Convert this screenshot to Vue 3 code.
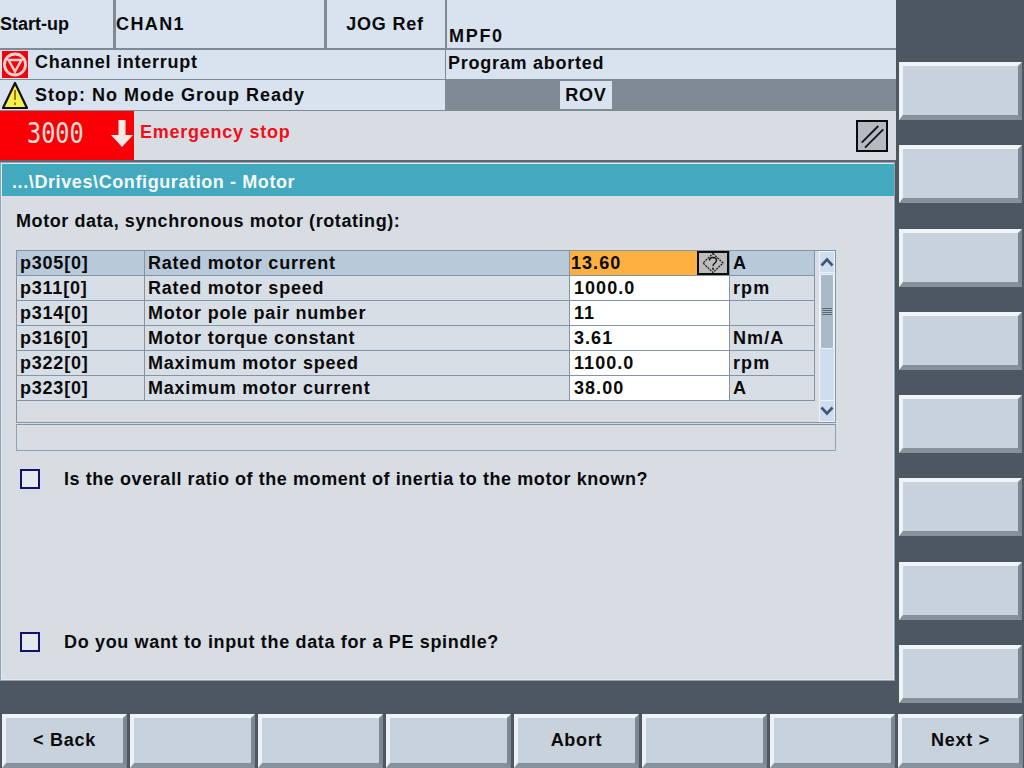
<script setup>
const params = [
  { id: 'p305[0]', name: 'Rated motor current', value: '13.60', unit: 'A', active: true },
  { id: 'p311[0]', name: 'Rated motor speed', value: '1000.0', unit: 'rpm' },
  { id: 'p314[0]', name: 'Motor pole pair number', value: '11', unit: '' },
  { id: 'p316[0]', name: 'Motor torque constant', value: '3.61', unit: 'Nm/A' },
  { id: 'p322[0]', name: 'Maximum motor speed', value: '1100.0', unit: 'rpm' },
  { id: 'p323[0]', name: 'Maximum motor current', value: '38.00', unit: 'A' },
]
const bottomKeys = ['< Back', '', '', '', 'Abort', '', '', 'Next >']
</script>

<template>
  <div class="screen">
    <div class="main">
      <header class="head">
        <div class="row1">
          <div class="h-cell c1">Start-up</div>
          <div class="h-cell c2">CHAN1</div>
          <div class="h-cell c3">JOG Ref</div>
          <div class="h-cell c4">MPF0</div>
        </div>
        <div class="row2">
          <div class="msg">
            <svg class="ico" viewBox="0 0 26 27" width="26" height="27">
              <rect width="26" height="27" fill="#f2000c" />
              <circle cx="13" cy="13.5" r="10.5" fill="none" stroke="#f6d5cf" stroke-width="2.800" />
              <path d="M6.500 9h13L13 20.500z" fill="none" stroke="#f6d5cf" stroke-width="2.400" />
            </svg>
            <span class="up2">Channel interrupt</span>
          </div>
          <div class="prog">Program aborted</div>
        </div>
        <div class="row3">
          <div class="msg">
            <svg class="ico" viewBox="0 0 26 29" width="26" height="29">
              <path d="M13 2 25 27H1z" fill="#f6f04a" stroke="#111" stroke-width="2.200" stroke-linejoin="round" />
              <path d="M13 9v10M13 21.500v2.500" stroke="#a06a10" stroke-width="1.800" />
            </svg>
            <span class="stop-text">Stop: No Mode Group Ready</span>
          </div>
          <div class="status"><span class="rov">ROV</span></div>
        </div>
        <div class="row4">
          <div class="alarm">
            <span class="alarm-no">3000</span>
            <svg class="arrow" viewBox="0 0 24 30" width="24" height="30">
              <path d="M8.500 1h7v15H23L12 28 1 16h7.500z" fill="#fbe9e6" />
            </svg>
          </div>
          <div class="alarm-text">Emergency stop</div>
          <svg class="reset" viewBox="0 0 32 32" width="32" height="32">
            <rect x="1" y="1" width="30" height="30" fill="#b4bac1" stroke="#0b0b0b" stroke-width="2" />
            <path d="M5.700 22.700 22.300 6M9 27.700 27.300 9.300" stroke="#111" stroke-width="1.800" />
          </svg>
        </div>
      </header>

      <section class="panel">
        <div class="title">...\Drives\Configuration - Motor</div>
        <div class="panel-body">
          <p class="intro">Motor data, synchronous motor (rotating):</p>

          <div class="table-wrap">
            <div class="table">
              <div class="rows">
                <div v-for="p in params" :key="p.id" class="row" :class="{ active: p.active }">
                  <div class="cell id">{{ p.id }}</div>
                  <div class="cell name">{{ p.name }}</div>
                  <div class="cell val">
                    <span>{{ p.value }}</span>
                    <svg v-if="p.active" class="help" viewBox="0 0 32 24" width="32" height="24">
                      <rect x="1" y="1" width="30" height="22" fill="#bcbcbc" stroke="#0b0b0b" stroke-width="2" />
                      <path d="M16 2.500 26 12 16 21.500 6 12z" fill="none" stroke="#111" stroke-width="1.200" stroke-dasharray="2 1" />
                      <path d="M12.500 9.500c0-4 7-4 7 0 0 2.500-3.500 2.500-3.500 5.500M16 16.500v2.500" fill="none" stroke="#111" stroke-width="1.400" />
                    </svg>
                  </div>
                  <div class="cell unit">{{ p.unit }}</div>
                </div>
              </div>
              <div class="scrollbar">
                <div class="sb-btn">
                  <svg viewBox="0 0 16 16" width="16" height="16"><path d="M2.500 11.500 8 5.500l5.500 6" fill="none" stroke="#44557c" stroke-width="2.600" /></svg>
                </div>
                <div class="sb-track">
                  <div class="sb-thumb"><i></i><i></i><i></i><i></i></div>
                </div>
                <div class="sb-btn">
                  <svg viewBox="0 0 16 16" width="16" height="16"><path d="M2.500 4.500 8 10.500l5.500-6" fill="none" stroke="#44557c" stroke-width="2.600" /></svg>
                </div>
              </div>
            </div>
            <div class="info"></div>
          </div>

          <label class="check first"><span class="box"></span>Is the overall ratio of the moment of inertia to the motor known?</label>
          <label class="check second"><span class="box"></span>Do you want to input the data for a PE spindle?</label>
        </div>
      </section>

      <nav class="bottom">
        <button v-for="(k, i) in bottomKeys" :key="i" class="key">{{ k }}</button>
      </nav>
    </div>

    <aside class="side">
      <button v-for="n in 8" :key="n" class="key"></button>
    </aside>
  </div>
</template>

<style>
html, body { margin: 0; background: #4d5761; }
</style>

<style scoped>
.screen {
  width: 1024px;
  height: 768px;
  display: flex;
  overflow: hidden;
  background: #4d5761;
  font-family: "Liberation Sans", Arial, sans-serif;
  font-size: 18px;
  font-weight: 700;
  color: #0a0a0a;
  letter-spacing: 0.57px;
}
.main { width: 896px; display: flex; flex-direction: column; }
.head { background: #d8e3ef; letter-spacing: 0.75px; }
.row1 {
  height: 48px;
  display: flex;
  border-bottom: 2px solid #7f8a94;
}
.h-cell { height: 48px; box-sizing: border-box; padding-top: 13px; line-height: 22px; }
.c1 { width: 116px; border-right: 3px solid #7f8a94; letter-spacing: 0; }
.c2 { width: 211px; border-right: 3px solid #7f8a94; padding-left: 0; letter-spacing: 1.400px; }
.c3 { width: 120px; border-right: 2px solid #7f8a94; text-align: center; padding-right: 2px; letter-spacing: 0.8px; }
.c4 { flex: 1; padding: 25px 0 0 2px; letter-spacing: 1.700px; }
.row2 { height: 29px; display: flex; }
.row3 { height: 30px; display: flex; border-top: 1px solid #7f8a94; border-bottom: 1px solid #7f8a94; }
.msg {
  width: 446px;
  box-sizing: border-box;
  display: flex;
  align-items: center;
  gap: 7px;
  padding-left: 2px;
  border-right: 1px solid #7f8a94;
}
.up2 { margin-top: -4px; }
.stop-text { letter-spacing: 1px; }
.ico { flex: none; }
.prog { flex: 1; padding-left: 2px; line-height: 26px; }
.status { flex: 1; background: #808a94; padding-left: 114px; }
.rov { display: block; width: 52px; height: 28px; margin-top: 1px; line-height: 28px; background: #d8e3ef; text-align: center; }
.row4 {
  height: 49px;
  display: flex;
  align-items: center;
  background: #d8dde4;
  border-bottom: 2px solid #5d6771;
}
.alarm {
  width: 134px;
  height: 49px;
  background: #fa0006;
  color: #fbe0dc;
  display: flex;
  align-items: center;
  box-sizing: border-box;
  padding-left: 27px;
  flex: none;
}
.alarm-no {
  font-family: "DejaVu Sans Mono", monospace;
  font-size: 28px;
  font-weight: 400;
  letter-spacing: 0;
  width: 83px;
  margin-top: -5px;
  transform: scaleX(0.84);
  transform-origin: left;
}
.arrow { margin-top: -4px; flex: none; }
.alarm-text { color: #ee1018; padding-left: 6px; flex: 1; margin-top: -6px; }
.reset { margin: 0 8px 0 0; }

.panel {
  margin: 0 1px 0 0;
  height: 519px;
  box-sizing: border-box;
  border: 2px solid #e3e9ef;
  outline: 1px solid #8ea3b5;
  outline-offset: -1px;
  background: #d8dde4;
  display: flex;
  flex-direction: column;
}
.title {
  height: 32px;
  flex: none;
  box-sizing: border-box;
  background: #42a9bf;
  color: #f4f8f8;
  line-height: 32px;
  padding: 2px 0 0 10px;
  margin-right: -1px;
  letter-spacing: 0.6px;
}
.panel-body { flex: 1; padding: 14px 0 0 14px; }
.intro { margin: 0; line-height: 22px; height: 40px; }
.table-wrap { width: 820px; }
.table {
  height: 173px;
  box-sizing: border-box;
  border: 1px solid #8394a6;
  display: flex;
  background: #d8dde4;
}
.rows { width: 798px; flex: none; }
.row {
  display: flex;
  height: 25px;
  box-sizing: border-box;
  border-bottom: 1px solid #8394a6;
  border-right: 1px solid #8394a6;
  background: #d8dee6;
  letter-spacing: 0.78px;
}
.row.active { background: #b8c9da; }
.cell { height: 24px; line-height: 24px; box-sizing: border-box; }
.id { width: 128px; padding-left: 3px; border-right: 1px solid #8394a6; }
.name { width: 425px; padding-left: 3px; border-right: 1px solid #8394a6; }
.val { width: 159px; padding-left: 4px; background: #fff; display: flex; justify-content: space-between; letter-spacing: 1.05px; }
.active .val { background: #fdb040; padding-left: 1px; }
.unit { flex: 1; padding-left: 3px; border-left: 1px solid #8394a6; letter-spacing: 1.100px; }
.help { flex: none; }
.scrollbar {
  width: 16px;
  flex: none;
  box-sizing: border-box;
  margin-left: 4px;
  display: flex;
  flex-direction: column;
  background: #cfdeee;
  border-left: 1px solid #eef3f8;
  border-right: 1px solid #eef3f8;
}
.sb-btn {
  height: 22px;
  flex: none;
  display: flex;
  align-items: center;
  justify-content: center;
  border-top: 1px solid #eef3f8;
  border-bottom: 1px solid #eef3f8;
  box-sizing: border-box;
}
.sb-btn svg { flex: none; }
.sb-track { flex: 1; }
.sb-thumb {
  height: 75px;
  margin-top: 1px;
  background: #a9b9c8;
  border: 1px solid #eef3f8;
  border-radius: 2px;
  box-sizing: border-box;
  display: flex;
  flex-direction: column;
  align-items: center;
  justify-content: center;
  gap: 1px;
}
.sb-thumb i { display: block; width: 10px; height: 1px; background: #5a6878; }
.info {
  height: 27px;
  box-sizing: border-box;
  border: 1px solid #8fa2b4;
  border-top-color: #8394a6;
  margin-top: 1px;
}
.check {
  display: flex;
  align-items: center;
  gap: 24px;
  line-height: 20px;
  padding-left: 4px;
}
.check.first { margin-top: 18px; }
.check.second { margin-top: 143px; letter-spacing: 0.66px; }
.box {
  width: 20px;
  height: 20px;
  box-sizing: border-box;
  border: 2px solid #12126a;
  background: #e4e9ef;
  flex: none;
}

.bottom {
  margin-top: auto;
  height: 54px;
  display: flex;
  gap: 3px;
  padding-left: 2px;
  letter-spacing: 0.75px;
}
.key {
  appearance: none;
  margin: 0;
  padding: 0;
  box-sizing: border-box;
  font: inherit;
  letter-spacing: inherit;
  color: inherit;
  background: #c8d2dc;
  border-style: solid;
  border-width: 4px 4px 5px 4px;
  border-color: #f1f4f7 #7c8792 #86919c #eef2f6;
}
.bottom .key { width: 125px; height: 54px; flex: none; }
.side {
  width: 128px;
  box-sizing: border-box;
  padding: 62px 2px 0 3px;
  display: flex;
  flex-direction: column;
  gap: 25.3px;
}
.side .key { width: 123px; height: 58px; flex: none; }
</style>
